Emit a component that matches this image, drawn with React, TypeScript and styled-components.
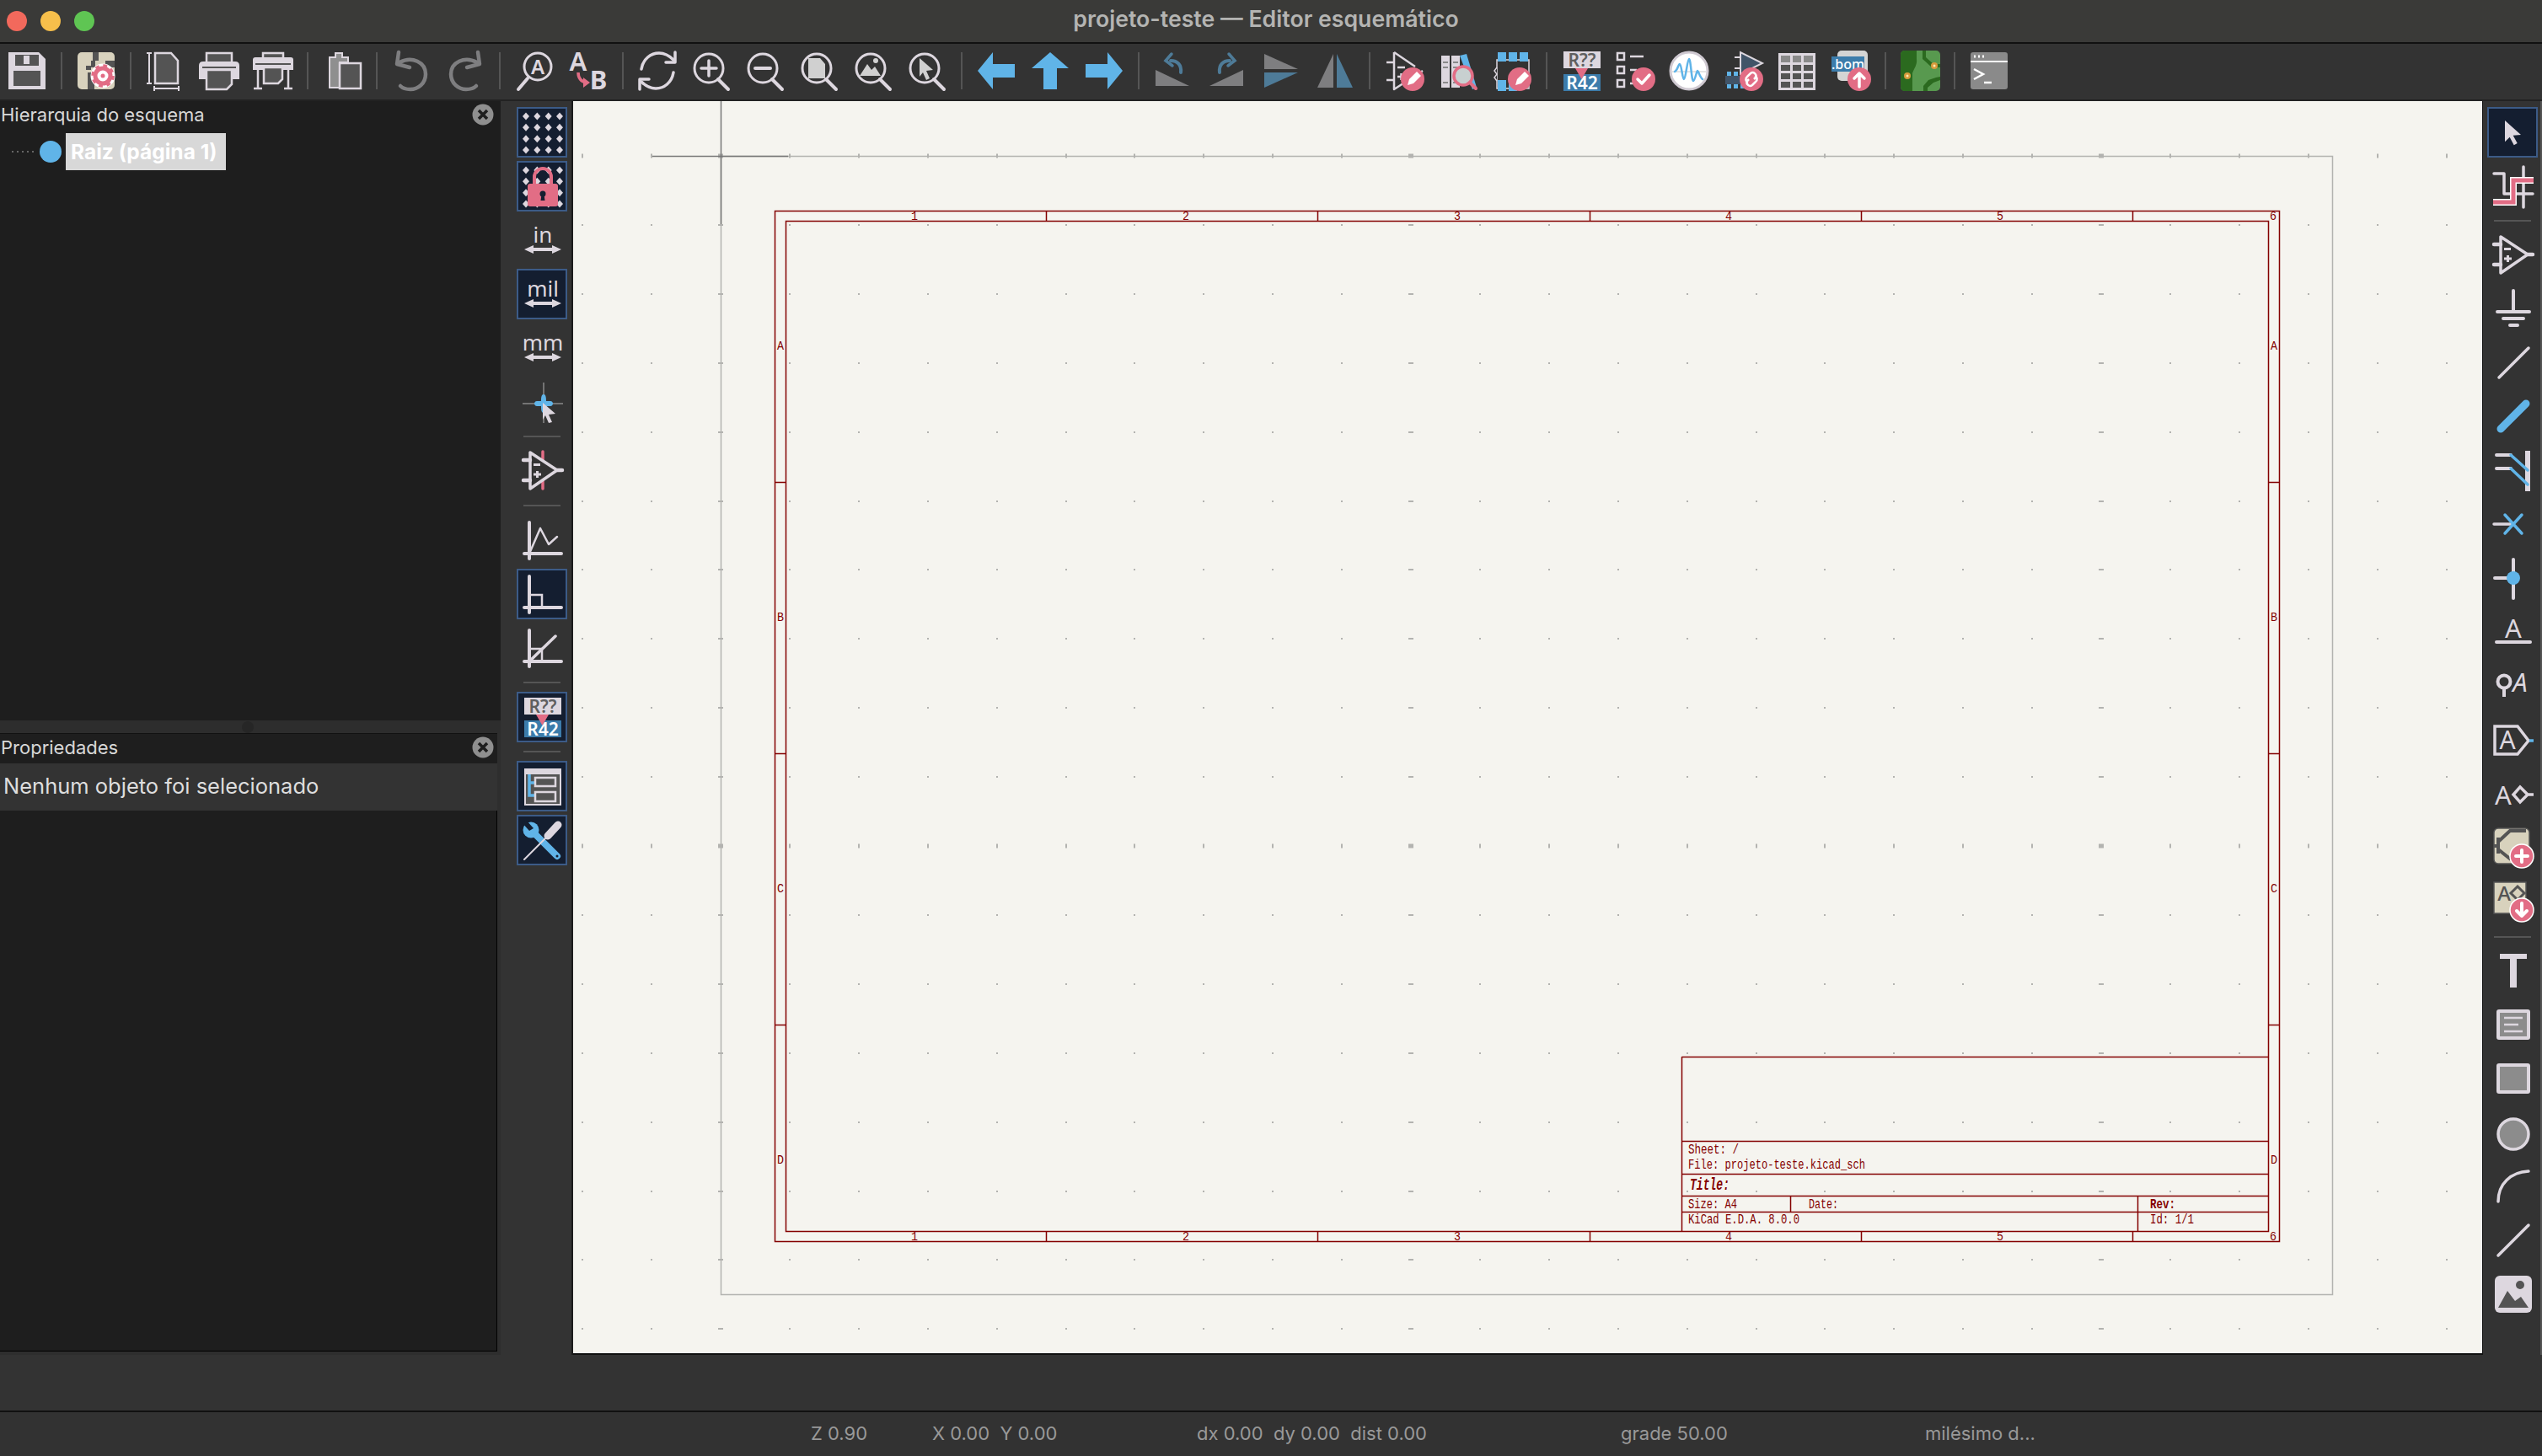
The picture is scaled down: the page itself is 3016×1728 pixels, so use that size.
import React from "react";
import styled, { createGlobalStyle } from "styled-components";

const L = "#ddd7df";
const D = "#545454";
const B = "#60b4e8";
const P = "#e26d85";
const G = "#7e7e80";
const DB = "#4e7b98";
const BEIGE = "#d8d2bd";
const FONT = '"Noto Sans", sans-serif';

const Label = ({ x, y, size, fill = L, children, italic, weight, anchor = "middle" }: any) => (
  <text
    x={x}
    y={y}
    fontSize={size}
    fill={fill}
    fontFamily={FONT}
    fontStyle={italic ? "italic" : "normal"}
    fontWeight={weight ?? 400}
    textAnchor={anchor}
  >
    {children}
  </text>
);

const Badge = ({ cx = 34, cy = 34, r = 14, outline = false, children }: any) => (
  <g>
    <circle cx={cx} cy={cy} r={r} fill={P} stroke={outline ? "#fff" : "none"} strokeWidth={outline ? 1.5 : 0} />
    {children}
  </g>
);

const Pencil = () => (
  <g>
    <path d="M28 41l2-7 9-9 5 5-9 9z" fill="#fff" />
  </g>
);

const Glass = ({ children }: any) => (
  <g>
    <circle cx="21" cy="21" r="17" fill="none" stroke={L} strokeWidth="3" />
    <path d="M32 34l12 12" stroke={L} strokeWidth="4" strokeLinecap="round" />
    {children}
  </g>
);

const OpAmp = ({ bar = false }: { bar?: boolean }) => (
  <g fill="none" stroke={L} strokeWidth="3.5" strokeLinejoin="round" strokeLinecap="round">
    {bar && <path d="M25 1v10M25 35v10" stroke={P} strokeWidth="3.5" />}
    <path d="M10 2v43l32-22z" />
    <path d="M2 11h8M2 35h8M42 23h6" strokeWidth="4.5" />
    <path d="M14 16.5h8M14 28h9M18.500 24v8" strokeWidth="3" strokeLinecap="butt" />
  </g>
);

const Axes = () => <path d="M9 3v43M3 40h44" stroke={L} strokeWidth="4" strokeLinecap="round" fill="none" />;

const Annotate = () => (
  <g>
    <rect x="3" y="1" width="44" height="20" fill={L} />
    <Label x="25" y="18.500" size="21" fill="#5f5f5f" weight={600}>R??</Label>
    <rect x="3" y="28" width="44" height="20" fill="#3c7cab" />
    <Label x="25" y="45.500" size="21" fill="#fff" weight={600}>R42</Label>
    <path d="M17 21h15l-7.500 13z" fill={P} />
  </g>
);

const GridDots = () => (
  <g fill={L}>
    {[5, 18.3, 31.7, 45].flatMap((y) =>
      [5, 18.3, 31.7, 45].map((x) => <path key={`${x}-${y}`} d={`M${x} ${y - 4.500}l4 4.500-4 4.500-4-4.500z`} />),
    )}
  </g>
);

const UnitArrow = () => <path d="M3 35l11-5v3h22v-3l11 5-11 5v-3H14v3z" fill={L} />;

const icons: Record<string, React.ReactNode> = {
  save: (
    <g>
      <path d="M2 2h36l8 8v36H2z" fill={L} />
      <rect x="10" y="5" width="28" height="13" fill={D} />
      <rect x="20" y="6" width="7" height="10" fill={L} />
      <rect x="8" y="24" width="32" height="18" fill={D} />
    </g>
  ),
  setup: (
    <g>
      <rect x="2" y="2" width="44" height="44" rx="5" fill={BEIGE} />
      <path d="M20 2h7v10h-4v8h-5v3h-6v-5h6v-6h2z" fill={D} />
      <path d="M35 12h11v8H35zM14 26h8v20h-8z" fill={D} />
      <circle cx="32" cy="30" r="14.500" fill="#fff" />
      <circle cx="32" cy="30" r="9" fill="none" stroke={P} strokeWidth="5" />
      <circle cx="32" cy="30" r="12" fill="none" stroke={P} strokeWidth="3.500" strokeDasharray="4.700 4.720" />
      <circle cx="32" cy="30" r="2.500" fill={P} />
    </g>
  ),
  page: (
    <g>
      <path d="M12 3h19l8 9v27H12z" fill={D} stroke={L} strokeWidth="2.500" />
      <path d="M5 3v36M2 3h6M2 39h6M11 45h29M11 42v6M40 42v6" stroke={L} strokeWidth="2" fill="none" />
    </g>
  ),
  print: (
    <g>
      <rect x="9" y="3" width="30" height="18" fill={D} stroke={L} strokeWidth="2.500" />
      <path d="M5 13h38q5 0 5 5v16H0V18q0-5 5-5z" fill={L} />
      <rect x="4" y="19" width="40" height="2" fill={D} />
      <path d="M9 23h30v17l-6 6H9z" fill={D} stroke={L} strokeWidth="2.500" />
    </g>
  ),
  plot: (
    <g>
      <rect x="12" y="3" width="24" height="9" fill={D} stroke={L} strokeWidth="2.500" />
      <path d="M3 8h42q3 0 3 3v12H0V11q0-3 3-3z" fill={L} />
      <rect x="3" y="15" width="42" height="2" fill={D} />
      <path d="M13 20h22v14l-5 5H13z" fill={D} stroke={L} strokeWidth="2.500" />
      <path d="M6 23v22M42 23v22M1 45h10M37 45h10" stroke={L} strokeWidth="2.500" />
    </g>
  ),
  paste: (
    <g>
      <path d="M9 8h7V3h8v5h7v6H21v30H9z" fill="#8f8f8f" stroke={L} strokeWidth="2" />
      <rect x="21" y="15" width="25" height="30" fill={D} stroke={L} strokeWidth="2.500" />
    </g>
  ),
  undo: (
    <g fill="none" stroke={G} strokeWidth="4.500" strokeLinecap="round" strokeLinejoin="round">
      <path d="M10 14c15-8 31 0 31 14 0 11-9 18-18 18-5 0-9-1-12-4" />
      <path d="M9 2l-2 14 15 4" />
    </g>
  ),
  redo: (
    <g fill="none" stroke={G} strokeWidth="4.500" strokeLinecap="round" strokeLinejoin="round" transform="matrix(-1 0 0 1 48 0)">
      <path d="M10 14c15-8 31 0 31 14 0 11-9 18-18 18-5 0-9-1-12-4" />
      <path d="M9 2l-2 14 15 4" />
    </g>
  ),
  find: (
    <g>
      <circle cx="28" cy="19" r="16" fill="none" stroke={L} strokeWidth="3" />
      <path d="M16 33L5 46" stroke={L} strokeWidth="4" strokeLinecap="round" />
      <Label x="28" y="28" size="24" weight={600}>A</Label>
    </g>
  ),
  replace: (
    <g>
      <Label x="12" y="24" size="31" weight={600}>A</Label>
      <Label x="36" y="46" size="31" weight={700}>B</Label>
      <path d="M12 26c0 8 4 11 10 12" fill="none" stroke={P} strokeWidth="3.500" />
      <path d="M18 32l8 6-8 6z" fill={P} />
    </g>
  ),
  refresh: (
    <g fill="none" stroke={L} strokeWidth="3.500" strokeLinecap="round" strokeLinejoin="round">
      <path d="M5 22C7 10 16 3 26 3c7 0 12 3 17 8" />
      <path d="M45 2v12H34" />
      <path d="M43 26c-2 12-11 19-21 19-7 0-12-3-17-8" />
      <path d="M3 46V34h11" />
    </g>
  ),
  zoomin: (
    <Glass>
      <path d="M21 12v18M12 21h18" stroke={L} strokeWidth="3.500" strokeLinecap="round" />
    </Glass>
  ),
  zoomout: (
    <Glass>
      <path d="M12 21h18" stroke={L} strokeWidth="4" strokeLinecap="round" />
    </Glass>
  ),
  zoomfit: (
    <Glass>
      <path d="M11 9h14l6 7v17H11z" fill="#d0d0d0" />
    </Glass>
  ),
  zoomobj: (
    <Glass>
      <path d="M8 30l9-14 5 7 4-4 7 11z" fill="#d0d0d0" />
      <circle cx="27" cy="12" r="3" fill="#d0d0d0" />
    </Glass>
  ),
  zoomsel: (
    <Glass>
      <path d="M15 9l16 14-8 1 4 9-4 2-4-9-4 5z" fill="#d0d0d0" />
    </Glass>
  ),
  left: <path d="M2 24L20 2v14h26v16H20v14z" fill={B} />,
  up: <path d="M24 2l22 19H32v25H16V21H2z" fill={B} />,
  right: <path d="M46 24L28 2v14H2v16h26v14z" fill={B} />,
  rotl: (
    <g>
      <path d="M3 23v19h40z" fill={G} />
      <path d="M33 26c1-9-4-14-12-14" fill="none" stroke={DB} strokeWidth="4" strokeLinecap="round" />
      <path d="M22 4l-7 8 8 6" fill="none" stroke={DB} strokeWidth="3.500" strokeLinecap="round" />
    </g>
  ),
  rotr: (
    <g>
      <path d="M43 23v19H3z" fill={G} />
      <path d="M15 26c-1-9 4-14 12-14" fill="none" stroke={DB} strokeWidth="4" strokeLinecap="round" />
      <path d="M26 4l7 8-8 6" fill="none" stroke={DB} strokeWidth="3.500" strokeLinecap="round" />
    </g>
  ),
  mirv: (
    <g>
      <path d="M4 4l40 18H4z" fill={G} />
      <path d="M4 26h40L4 44z" fill={DB} />
    </g>
  ),
  mirh: (
    <g>
      <path d="M22 4v40H3z" fill={G} />
      <path d="M26 4v40h19z" fill={DB} />
    </g>
  ),
  symedit: (
    <g>
      <g fill="none" stroke={L} strokeWidth="2.500" strokeLinejoin="round">
        <path d="M12 2v44l34-22" />
        <path d="M12 2l25 17" />
        <path d="M3 14h9M3 35h9M16 20h9M16 31h9M20.500 27v8" />
      </g>
      <Badge cx={34} cy={34} r={14}><Pencil /></Badge>
    </g>
  ),
  libs: (
    <g>
      <rect x="4" y="6" width="10" height="38" fill={L} />
      <rect x="16" y="6" width="10" height="38" fill={L} />
      <path d="M6 14h6M6 20h6M6 38h6M18 14h6M18 20h6M18 38h6" stroke="#8a8a8a" strokeWidth="2" />
      <path d="M26 6l8-2 12 40-5 2z" fill={B} />
      <circle cx="30" cy="30" r="11" fill="#c8d0d0" stroke={P} strokeWidth="3.500" />
      <path d="M38 38l7 7" stroke={P} strokeWidth="4" strokeLinecap="round" />
    </g>
  ),
  fpedit: (
    <g>
      <path d="M6 11h38v34H6z" fill="none" stroke={L} strokeWidth="1.500" />
      <path d="M6 20l-3 4 3 4-3 4 3 4" fill="#333" stroke={L} strokeWidth="1.500" />
      <path d="M7 2h10v11H7zM20 2h10v11H20zM33 2h10v11H33zM7 35h10v13H7zM20 35h10v13H20z" fill={B} />
      <Badge cx={33} cy={34} r={14}><Pencil /></Badge>
    </g>
  ),
  annotate: <Annotate />,
  erc: (
    <g>
      <path d="M3 3h8v8H3zM3 19h8v8H3zM3 35h8v8H3z" fill="none" stroke={L} strokeWidth="2.500" />
      <path d="M18 7h16M18 23h8M18 39h6" stroke={L} strokeWidth="2.500" />
      <Badge cx={34} cy={34} r={14}>
        <path d="M27 34l5 5 9-10" fill="none" stroke="#fff" strokeWidth="3.500" strokeLinecap="round" strokeLinejoin="round" />
      </Badge>
    </g>
  ),
  sim: (
    <g>
      <circle cx="24" cy="24" r="22" fill="#fff" stroke="#cfc9d1" strokeWidth="3" />
      <path d="M4 25h40" stroke="#c8c8c8" strokeWidth="1" />
      <path d="M7 25c4-2 4-9 6-9s3 18 5 18 4-24 6-24 3 26 5 26 4-12 5-12 3 8 6 10" fill="none" stroke={B} strokeWidth="2.500" strokeLinecap="round" />
    </g>
  ),
  link: (
    <g>
      <path d="M21 2v26l26-13z" fill="#415468" stroke={L} strokeWidth="2" />
      <path d="M14 8h7M14 21h7" stroke={L} strokeWidth="2" />
      <path d="M5 25h5v20H5zM13 25h5v20h-5zM21 30h5v15h-5z" fill={B} />
      <rect x="3" y="30" width="26" height="10" fill="#415468" />
      <Badge cx={34} cy={34} r={14}>
        <path d="M30 38a4 4 0 0 1-1-7l4-4a4 4 0 0 1 6 5l-2 2M38 30a4 4 0 0 1 1 7l-4 4a4 4 0 0 1-6-5l2-2" fill="none" stroke="#fff" strokeWidth="2.500" />
      </Badge>
    </g>
  ),
  table: (
    <g>
      <rect x="2" y="3" width="44" height="44" fill={L} />
      <path d="M5 6h11v8H5zM19 6h10v8H19zM32 6h11v8H32z" fill="#8a8a8a" />
      <path d="M5 17h11v7H5zM19 17h10v7H19zM32 17h11v7H32zM5 27h11v7H5zM19 27h10v7H19zM32 27h11v7H32zM5 37h11v7H5zM19 37h10v7H19zM32 37h11v7H32z" fill={D} />
    </g>
  ),
  bom: (
    <g>
      <rect x="8" y="0" width="36" height="36" rx="5" fill="#d4d4d4" />
      <rect x="1" y="7" width="39" height="18" fill="#3c7cab" />
      <Label x="20.500" y="22" size="16" fill="#fff" weight={500}>.bom</Label>
      <Badge cx={34} cy={34} r={14}>
        <path d="M34 43V27M28 33l6-6 6 6" fill="none" stroke="#fff" strokeWidth="3.500" strokeLinecap="round" strokeLinejoin="round" />
      </Badge>
    </g>
  ),
  pcb: (
    <g>
      <rect x="1" y="0" width="47" height="48" rx="5" fill="#58994f" />
      <path d="M1 5q0-5 5-5h14v10c1 7-3 11-5 17v21H6q-5 0-5-5z" fill="#2b6a1f" />
      <path d="M27 0h4v8l9 8h8v4H38L27 10zM28 48v-6l6-7 9-3 5-1v4l-8 3-7 6v4z" fill="#2b6a1f" />
      <circle cx="41" cy="18" r="4" fill="#d79b3d" />
      <circle cx="41" cy="18" r="1.500" fill="#ffe9b0" />
      <circle cx="9" cy="30" r="4" fill="#d79b3d" />
      <circle cx="9" cy="30" r="1.500" fill="#ffe9b0" />
    </g>
  ),
  console: (
    <g>
      <rect x="2" y="2" width="44" height="44" rx="3" fill="#8a8a8a" />
      <rect x="2" y="12" width="44" height="2" fill="#fff" />
      <path d="M6 7h2M11 7h2M16 7h2" stroke="#fff" strokeWidth="3" />
      <path d="M6 22l11 6-11 6" fill="none" stroke="#fff" strokeWidth="2.500" />
      <path d="M18 38h9" stroke="#fff" strokeWidth="2.500" />
    </g>
  ),
  grid: <GridDots />,
  gridlock: (
    <g>
      <GridDots />
      <path d="M15 22v-9a10 10 0 0 1 20 0v9" fill="none" stroke={P} strokeWidth="4" />
      <rect x="7" y="21" width="36" height="27" rx="3" fill={P} />
      <circle cx="25" cy="33" r="3.500" fill="#141e30" />
      <path d="M23.500 34h3l1 7h-5z" fill="#141e30" />
    </g>
  ),
  inch: (
    <g>
      <Label x="25" y="27" size="26">in</Label>
      <UnitArrow />
    </g>
  ),
  mil: (
    <g>
      <Label x="25" y="27" size="26">mil</Label>
      <UnitArrow />
    </g>
  ),
  mm: (
    <g>
      <Label x="25" y="27" size="26">mm</Label>
      <UnitArrow />
    </g>
  ),
  cross: (
    <g>
      <path d="M26 1v48M1 26h48" stroke="#8a8a8a" strokeWidth="1.500" />
      <path d="M26 15c-3 0-3 5-3 8h-5c-4 0-4 6 0 6h5c0 3 0 8 3 8s3-5 3-8h5c4 0 4-6 0-6h-5c0-3 0-8-3-8z" fill={B} />
      <path d="M25 25l15 13-8 1 4 9-4 1-4-9-3 5z" fill={L} />
    </g>
  ),
  opamp: <OpAmp bar />,
  opampplain: <OpAmp />,
  polar: (
    <g>
      <Axes />
      <path d="M9 40l13-30 10 19 10-9" fill="none" stroke={L} strokeWidth="2.500" strokeLinejoin="round" strokeLinecap="round" />
    </g>
  ),
  ortho: (
    <g>
      <Axes />
      <path d="M9 25h15v15" fill="none" stroke={L} strokeWidth="2.500" />
    </g>
  ),
  diag: (
    <g>
      <Axes />
      <path d="M9 25h15v15" fill="none" stroke={L} strokeWidth="2.500" />
      <path d="M9 40l31-30" stroke={L} strokeWidth="3.500" strokeLinecap="round" />
    </g>
  ),
  tree: (
    <g>
      <rect x="3" y="3" width="44" height="44" fill={L} />
      <rect x="5" y="10" width="40" height="35" fill={D} />
      <path d="M9 10v25h7M9 20h7" stroke={B} strokeWidth="3.500" fill="none" />
      <path d="M16 14h24v10H16zM16 31h24v11H16z" fill={D} stroke={L} strokeWidth="2.500" />
    </g>
  ),
  tools: (
    <g>
      <path d="M13 14l29 29" stroke={B} strokeWidth="8" strokeLinecap="round" />
      <circle cx="11" cy="12" r="9.500" fill={B} />
      <path d="M5 0L14 10l-5 3L0 3z" fill="#141e30" />
      <circle cx="42" cy="43" r="1.500" fill="#141e30" />
      <path d="M3 47l27-27" stroke={L} strokeWidth="2" strokeLinecap="round" />
      <path d="M31 19l12-13" stroke={L} strokeWidth="9" strokeLinecap="round" />
    </g>
  ),
  select: <path d="M15 10l19 17-9.300.7 5 9.300-4 2.300-5-9.600L15 35.300z" fill={L} />,
  route: (
    <g>
      <path d="M2 9h12v24h8M37 1v48M22 33h26" fill="none" stroke={L} strokeWidth="3.500" strokeLinecap="round" strokeLinejoin="round" />
      <path d="M1 43h24V17h24" fill="none" stroke="#fff" strokeWidth="8" />
      <path d="M1 43h24V17h24" fill="none" stroke={P} strokeWidth="5" />
    </g>
  ),
  ground: <path d="M25 2v25M6 27h38M13 35h24M21 43h9" stroke={L} strokeWidth="4" strokeLinecap="round" fill="none" />,
  wire: <path d="M8 41L43 6" stroke={L} strokeWidth="3.500" strokeLinecap="round" />,
  bus: <path d="M10 38L40 8" stroke={B} strokeWidth="9" strokeLinecap="round" />,
  busentry: (
    <g>
      <path d="M5 5h17M5 21h17" stroke={L} strokeWidth="4" strokeLinecap="round" />
      <rect x="39" y="0" width="6" height="48" fill={L} />
      <path d="M22 5l20 18M22 21l20 19" stroke={B} strokeWidth="3.500" strokeLinecap="round" />
    </g>
  ),
  noconn: (
    <g>
      <path d="M2 23h20" stroke={L} strokeWidth="3.500" strokeLinecap="round" />
      <path d="M15 12l20 22M35 12L15 34" stroke={B} strokeWidth="3.500" strokeLinecap="round" />
    </g>
  ),
  junction: (
    <g>
      <path d="M3 23h22M25 1v46" stroke={L} strokeWidth="4" strokeLinecap="round" />
      <circle cx="25" cy="23" r="8" fill={B} />
    </g>
  ),
  label: (
    <g>
      <Label x="25" y="30" size="31">A</Label>
      <path d="M5 35h40" stroke={L} strokeWidth="4" strokeLinecap="round" />
    </g>
  ),
  netlabel: (
    <g>
      <circle cx="14" cy="18" r="7.500" fill="none" stroke={L} strokeWidth="4" />
      <path d="M14 25v11" stroke={L} strokeWidth="4" />
      <Label x="33" y="30" size="31" italic>A</Label>
    </g>
  ),
  hlabel: (
    <g>
      <path d="M3 7h27l13 17-13 16H3z" fill="none" stroke={L} strokeWidth="3.500" />
      <path d="M44 24h5" stroke={B} strokeWidth="3.500" />
      <Label x="18" y="34" size="30">A</Label>
    </g>
  ),
  hpin: (
    <g>
      <Label x="13" y="36" size="31">A</Label>
      <path d="M33 15l9 9-9 9-8-9zM42 24h7" fill="none" stroke={L} strokeWidth="3.500" />
    </g>
  ),
  sheet: (
    <g>
      <rect x="2" y="0" width="42" height="42" rx="5" fill={BEIGE} stroke={D} strokeWidth="1.500" />
      <path d="M7 11v19M7 21h-5M7 16L21 3h19M7 25l15 12" fill="none" stroke={D} strokeWidth="4" />
      <Badge cx={35} cy={33} r={14} outline>
        <path d="M35 26v14M28 33h14" stroke="#fff" strokeWidth="4" strokeLinecap="round" />
      </Badge>
    </g>
  ),
  importsheet: (
    <g>
      <rect x="2" y="0" width="38" height="37" fill={BEIGE} stroke={D} strokeWidth="1.500" />
      <Label x="14" y="22" size="24" fill={D} weight={500}>A</Label>
      <path d="M30 5l8 8-8 8-8-8z" fill="none" stroke={D} strokeWidth="3" />
      <Badge cx={35} cy={33} r={14} outline>
        <path d="M35 25v15M29 34l6 6 6-6" fill="none" stroke="#fff" strokeWidth="4" strokeLinecap="round" strokeLinejoin="round" />
      </Badge>
    </g>
  ),
  text: <path d="M9 3h32v6H29v34h-8V9H9z" fill={L} />,
  textbox: (
    <g>
      <rect x="7" y="7" width="36" height="32" fill="#8c8c8c" stroke={L} strokeWidth="4" rx="1" />
      <path d="M14 15h22M14 23h17M14 31h22" stroke={L} strokeWidth="2.500" />
    </g>
  ),
  rect: <rect x="7" y="7" width="36" height="32" fill="#8c8c8c" stroke={L} strokeWidth="4" rx="1" />,
  circle: <circle cx="25" cy="25" r="18" fill="#8c8c8c" stroke={L} strokeWidth="3.500" />,
  arc: <path d="M7 41C7 20 22 6 43 5" fill="none" stroke={L} strokeWidth="3.500" strokeLinecap="round" />,
  line: <path d="M7 41L43 5" stroke={L} strokeWidth="3.500" strokeLinecap="round" />,
  image: (
    <g>
      <rect x="3" y="1" width="44" height="44" rx="6" fill={L} />
      <path d="M7 39l11-20 9 12 7-5 9 13z" fill={D} />
      <circle cx="33" cy="12" r="5" fill={D} />
    </g>
  ),
};

const topTools = [
  "save", "|", "setup", "|", "page", "print", "plot", "|", "paste", "|", "undo", "redo", "|", "find", "replace", "|",
  "refresh", "zoomin", "zoomout", "zoomfit", "zoomobj", "zoomsel", "|", "left", "up", "right", "|",
  "rotl", "rotr", "mirv", "mirh", "|", "symedit", "libs", "fpedit", "|", "annotate", "erc", "sim", "link", "table", "bom", "|",
  "pcb", "|", "console",
];

const leftTools = [
  "grid*", "gridlock*", "inch", "mil*", "mm", "cross", "|", "opamp", "|", "polar", "ortho*", "diag", "|",
  "annotate*", "|", "tree*", "tools*",
];

const rightTools = [
  "select*", "route", "|", "opampplain", "ground", "wire", "bus", "busentry", "noconn", "junction", "label",
  "netlabel", "hlabel", "hpin", "sheet", "importsheet", "|", "text", "textbox", "rect", "circle", "arc", "line", "image",
];

const X0 = 855;
const Y0 = 185;
const STEP = 81.9;
const RED = "#840000";

const dots: React.ReactNode[] = [];
for (let i = -2; i <= 25; i++) {
  for (let j = 0; j <= 17; j++) {
    const x = Math.round(X0 + i * STEP);
    const y = Math.round(Y0 + j * STEP);
    const w = i % 10 === 0 ? 6 : 2;
    const h = j % 10 === 0 ? 5 : 2;
    dots.push(<rect key={`${i}-${j}`} x={x - w / 2} y={y - h / 2} width={w} height={h} fill="#b3b3b0" />);
  }
}

const SheetText = ({ x, y, size, width, bold, italic, children, anchor }: any) => (
  <text
    x={x}
    y={y}
    fontSize={size}
    fill={RED}
    fontFamily='"Liberation Mono", monospace'
    fontWeight={bold ? 700 : 400}
    fontStyle={italic ? "italic" : "normal"}
    textLength={width}
    lengthAdjust="spacingAndGlyphs"
    textAnchor={anchor}
  >
    {children}
  </text>
);

const RedLines = ({ d }: { d: string }) => <path d={d} fill="none" stroke={RED} strokeWidth="1.500" />;

const Schematic = () => (
  <CanvasSvg viewBox="680 120 2265 1487">
    {dots}
    <rect x="855.500" y="185.500" width="1912" height="1351" fill="none" stroke="#b3b3b0" strokeWidth="1.500" />
    <path d="M774 185.500h161M855.500 120v146" stroke="#777" strokeWidth="1.500" />
    <RedLines d="M919.500 250.500H2704.500V1473.500H919.500ZM932.500 262.500H2691.500V1461.500H932.500Z" />
    <RedLines d="M1241.500 250v12M1563.500 250v12M1886.500 250v12M2208.500 250v12M2530.500 250v12M1241.500 1461v12M1563.500 1461v12M1886.500 1461v12M2208.500 1461v12M2530.500 1461v12" />
    <RedLines d="M919 572.500h13M919 894.500h13M919 1216.500h13M2692 572.500h13M2692 894.500h13M2692 1216.500h13" />
    <RedLines d="M1995.500 1254.500H2691.500M1995.500 1254v207M1995.500 1354.500H2691.500M1995.500 1393.500H2691.500M1995.500 1419.500H2691.500M1995.500 1438.500H2691.500M2124.500 1419v19M2536.500 1419v42" />
    {["1", "2", "3", "4", "5", "6"].map((n, i) => {
      const x = i === 5 ? 2697 : 1085 + i * 322;
      return (
        <g key={n}>
          <SheetText x={x} y={261} size={15} width={8} anchor="middle">{n}</SheetText>
          <SheetText x={x} y={1472} size={15} width={8} anchor="middle">{n}</SheetText>
        </g>
      );
    })}
    {["A", "B", "C", "D"].map((n, i) => (
      <g key={n}>
        <SheetText x={926} y={415 + i * 322} size={15} width={8} anchor="middle">{n}</SheetText>
        <SheetText x={2698} y={415 + i * 322} size={15} width={8} anchor="middle">{n}</SheetText>
      </g>
    ))}
    <SheetText x={2003} y={1369} size={16} width={60}>Sheet: /</SheetText>
    <SheetText x={2003} y={1387} size={16} width={210}>File: projeto-teste.kicad_sch</SheetText>
    <SheetText x={2005} y={1412} size={21} width={47} bold italic>Title:</SheetText>
    <SheetText x={2003} y={1434} size={16} width={58}>Size: A4</SheetText>
    <SheetText x={2146} y={1434} size={16} width={35}>Date:</SheetText>
    <SheetText x={2551} y={1434} size={16} width={30} bold>Rev:</SheetText>
    <SheetText x={2003} y={1452} size={16} width={132}>KiCad E.D.A. 8.0.0</SheetText>
    <SheetText x={2551} y={1452} size={16} width={52}>Id: 1/1</SheetText>
  </CanvasSvg>
);

const ToolIcon = ({ name }: { name: string }) => (
  <svg width="48" height="48" viewBox="0 0 48 48">
    {icons[name]}
  </svg>
);

const renderTools = (list: string[]) =>
  list.map((item, i) => {
    if (item === "|") return <Separator key={i} />;
    const active = item.endsWith("*");
    const name = active ? item.slice(0, -1) : item;
    return (
      <Tool key={i} $active={active}>
        <ToolIcon name={name} />
      </Tool>
    );
  });

const CloseButton = () => (
  <svg width="26" height="26" viewBox="0 0 26 26">
    <circle cx="13" cy="13" r="12.500" fill="#8f8f8f" />
    <path d="M8 8l10 10M18 8L8 18" stroke="#1e1e1e" strokeWidth="3.500" />
  </svg>
);

export default function App() {
  return (
    <>
      <GlobalStyle />
      <Window>
        <TitleBar>
          <Lights>
            <Light $color="#f2695c" />
            <Light $color="#f7bf4b" />
            <Light $color="#5fc553" />
          </Lights>
          <WindowTitle>projeto-teste — Editor esquemático</WindowTitle>
        </TitleBar>
        <TopBar>{renderTools(topTools)}</TopBar>
        <Workspace>
          <Sidebar>
            <HierarchyPanel>
              <PanelHeader>
                Hierarquia do esquema
                <CloseButton />
              </PanelHeader>
              <TreeRow>
                <TreeDots />
                <TreeBullet />
                <TreeItem>Raiz (página 1)</TreeItem>
              </TreeRow>
            </HierarchyPanel>
            <Splitter>
              <SplitterGrip />
            </Splitter>
            <PropertiesPanel>
              <PanelHeader>
                Propriedades
                <CloseButton />
              </PanelHeader>
              <EmptyNote>Nenhum objeto foi selecionado</EmptyNote>
              <PropertiesBody />
            </PropertiesPanel>
          </Sidebar>
          <LeftBar>{renderTools(leftTools)}</LeftBar>
          <Canvas>
            <Schematic />
          </Canvas>
          <RightBar>{renderTools(rightTools)}</RightBar>
        </Workspace>
        <MessageBar />
        <StatusBar>
          <StatusField $width={144}>Z 0.90</StatusField>
          <StatusField $width={314}>X 0.00&nbsp;&nbsp;Y 0.00</StatusField>
          <StatusField $width={503}>dx 0.00&nbsp;&nbsp;dy 0.00&nbsp;&nbsp;dist 0.00</StatusField>
          <StatusField $width={361}>grade 50.00</StatusField>
          <StatusField $width={200}>milésimo d...</StatusField>
        </StatusBar>
      </Window>
    </>
  );
}

const GlobalStyle = createGlobalStyle`
  html, body {
    margin: 0;
    padding: 0;
    background: #333;
  }
  * {
    box-sizing: border-box;
  }
`;

const Window = styled.div`
  color: #dcdcdc;
  display: flex;
  flex-direction: column;
  font-family: Inter, "Liberation Sans", sans-serif;
  height: 1728px;
  overflow: hidden;
  width: 3016px;
`;

const TitleBar = styled.div`
  align-items: center;
  background: #3a3a38;
  border-bottom: 2px solid #111;
  display: flex;
  flex: 0 0 52px;
  padding-left: 8px;
  position: relative;
`;

const Lights = styled.div`
  display: flex;
  gap: 16px;
`;

const Light = styled.span<{ $color: string }>`
  background: ${(props) => props.$color};
  border-radius: 50%;
  height: 24px;
  width: 24px;
`;

const WindowTitle = styled.div`
  color: #b4b4b2;
  flex: 1;
  font-size: 26.700px;
  font-weight: 600;
  padding: 0 124px 6px 0;
  text-align: center;
`;

const TopBar = styled.div`
  align-items: center;
  background: #333;
  border-bottom: 2px solid #222;
  display: flex;
  flex: 0 0 68px;
  padding-bottom: 2px;
`;

const Tool = styled.div<{ $active?: boolean }>`
  align-items: center;
  display: flex;
  flex: 0 0 64px;
  height: 64px;
  justify-content: center;
  position: relative;
  width: 64px;

  svg {
    overflow: visible;
    position: relative;
  }

  ${(props) =>
    props.$active &&
    `
    &::before {
      background: #141e30;
      border: 2px solid #3c5b87;
      content: "";
      inset: 2px;
      position: absolute;
    }
  `}
`;

const Separator = styled.div`
  flex: 0 0 18px;
  position: relative;

  ${TopBar} > & {
    align-self: center;
    height: 44px;
    &::after {
      background: #555;
      content: "";
      height: 100%;
      left: 8px;
      position: absolute;
      width: 2px;
    }
  }

  &:not(${TopBar} > &) {
    width: 44px;
    &::after {
      background: #555;
      content: "";
      height: 2px;
      left: 0;
      position: absolute;
      top: 8px;
      width: 100%;
    }
  }
`;

const Workspace = styled.div`
  display: flex;
  flex: 0 0 1488px;
`;

const Sidebar = styled.div`
  background: #2e2e2e;
  display: flex;
  flex: 0 0 594px;
  flex-direction: column;
`;

const HierarchyPanel = styled.div`
  background: #1e1e1e;
  flex: 0 0 735px;
`;

const PanelHeader = styled.div`
  align-items: center;
  color: #d8d8d8;
  display: flex;
  flex: 0 0 35px;
  font-size: 22px;
  height: 35px;
  justify-content: space-between;
  padding: 0 8px 3px 1px;

  ${() => PropertiesPanel} & {
    padding-right: 4px;
  }
`;

const TreeRow = styled.div`
  align-items: center;
  display: flex;
  height: 44px;
  margin-top: 3px;
  position: relative;
`;

const TreeDots = styled.span`
  background: repeating-linear-gradient(90deg, #666 0 2px, transparent 2px 6px);
  flex: 0 0 26px;
  height: 2px;
  margin-left: 14px;
`;

const TreeBullet = styled.span`
  background: #60b4e8;
  border-radius: 50%;
  flex: 0 0 26px;
  height: 26px;
  margin: 0 5px 0 7px;
`;

const TreeItem = styled.span`
  align-items: center;
  background: #d8d8d8;
  color: #fff;
  display: flex;
  font-size: 24.500px;
  font-weight: 700;
  height: 44px;
  padding: 0 4px 0 6px;
  width: 190px;
  white-space: nowrap;
`;

const Splitter = styled.div`
  align-items: center;
  background: #2d2d2d;
  display: flex;
  flex: 0 0 15px;
  justify-content: center;
  padding-right: 6px;
`;

const SplitterGrip = styled.span`
  background: #262626;
  border-radius: 50%;
  height: 14px;
  width: 14px;
`;

const PropertiesPanel = styled.div`
  background: #1e1e1e;
  border-top: 1px solid #111;
  display: flex;
  flex: 0 0 734px;
  flex-direction: column;
  margin-right: 4px;
`;

const EmptyNote = styled.div`
  align-items: center;
  background: #333;
  color: #dedede;
  display: flex;
  flex: 0 0 56px;
  font-size: 25.500px;
  padding: 0 0 3px 4px;
`;

const PropertiesBody = styled.div`
  border-bottom: 1px solid #000;
  border-right: 1px solid #000;
  flex: 1;
`;

const LeftBar = styled.div`
  align-items: center;
  background: #333;
  border-right: 2px solid #1c1c1c;
  display: flex;
  flex: 0 0 86px;
  flex-direction: column;
  padding: 5px 0 0 14px;
`;

const Canvas = styled.div`
  background: #f5f4ef;
  border-bottom: 2px solid #111;
  flex: 0 0 2265px;
  height: 1488px;
`;

const CanvasSvg = styled.svg`
  display: block;
  height: 1487px;
  width: 2265px;
`;

const RightBar = styled.div`
  align-items: center;
  background: #333;
  border-left: 1px solid #111;
  border-right: 2px solid #555;
  display: flex;
  flex: 0 0 71px;
  flex-direction: column;
  padding: 5px 0 0 2px;
`;

const MessageBar = styled.div`
  background: #333;
  border-bottom: 2px solid #111;
  flex: 0 0 68px;
`;

const StatusBar = styled.div`
  align-items: center;
  background: #323232;
  color: #999;
  display: flex;
  flex: 1;
  font-size: 22px;
  padding: 0 0 2px 962px;
`;

const StatusField = styled.span<{ $width: number }>`
  flex: 0 0 ${(props) => props.$width}px;
  white-space: nowrap;
`;
